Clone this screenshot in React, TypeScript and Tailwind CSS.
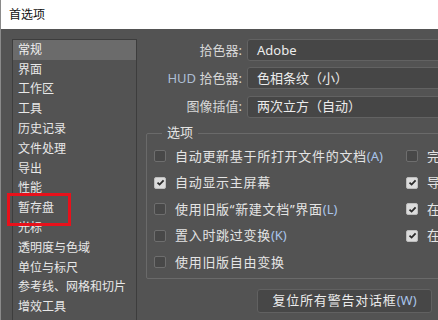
import React from "react";

const categories = [
  "常规",
  "界面",
  "工作区",
  "工具",
  "历史记录",
  "文件处理",
  "导出",
  "性能",
  "暂存盘",
  "光标",
  "透明度与色域",
  "单位与标尺",
  "参考线、网格和切片",
  "增效工具",
];

const pickers = [
  { label: "拾色器:", value: "Adobe" },
  { label: "HUD 拾色器:", value: "色相条纹（小）", hud: true },
  { label: "图像插值:", value: "两次立方（自动）" },
];

interface Opt {
  text: string;
  key?: string;
  checked: boolean;
}

const leftOptions: Opt[] = [
  { text: "自动更新基于所打开文件的文档", key: "(A)", checked: false },
  { text: "自动显示主屏幕", checked: true },
  { text: "使用旧版“新建文档”界面", key: "(L)", checked: false },
  { text: "置入时跳过变换", key: "(K)", checked: false },
  { text: "使用旧版自由变换", checked: false },
];

const rightOptions: Opt[] = [
  { text: "完成后用声音提示", checked: false },
  { text: "导出剪贴板", checked: true },
  { text: "在置入时调整图像大小", checked: true },
  { text: "在置入时始终创建智能对象", checked: true },
];

function Checkbox({ checked }: { checked: boolean }) {
  if (checked) {
    return (
      <span className="w-[12px] h-[12px] rounded-[2px] bg-[#dcdcdc] border border-[#bdbdbd] flex items-center justify-center shrink-0">
        <svg width="9" height="9" viewBox="0 0 9 9">
          <polyline points="1.5,4.6 3.6,6.6 7.6,2.4" fill="none" stroke="#2a2a2a" strokeWidth="1.8" />
        </svg>
      </span>
    );
  }
  return <span className="w-[12px] h-[12px] rounded-[2px] bg-[#484848] border border-[#6e6e6e] shrink-0" />;
}

function OptionRow({ opt }: { opt: Opt }) {
  return (
    <div className="h-[26.5px] flex items-center gap-[9px] whitespace-nowrap">
      <Checkbox checked={opt.checked} />
      <span className="text-[#e4e4e4] text-[13px] tracking-[0.7px]">
        {opt.text}
        {opt.key && <span className="text-[#a9c4ea] tracking-normal">{opt.key}</span>}
      </span>
    </div>
  );
}

export default function App() {
  return (
    <div
      className="w-[438px] h-[320px] overflow-hidden bg-[#535353] text-[12px] leading-none border-l border-[#8a8a8a]"
      style={{ fontFamily: '"Noto Sans", "Noto Sans CJK SC", sans-serif' }}
    >
      <div className="h-[29px] bg-white flex items-center pl-[8px] text-[#111] text-[12px]">首选项</div>

      <div className="flex pt-[10px] pl-[11px]">
        {/* category list */}
        <div className="relative w-[125px] h-[300px] border border-[#3d3d3d] shrink-0">
          {categories.map((c, i) => (
            <div
              key={c}
              className={
                i === 0
                  ? "h-[19.8px] flex items-center pl-[5px] bg-[#6b6b6b] text-[#f0f0f0]"
                  : "h-[19.8px] flex items-center pl-[5px] text-[#e8e8e8]"
              }
            >
              {c}
            </div>
          ))}
          <div className="absolute left-[-6px] top-[153px] w-[64px] h-[33px] border-[3px] border-[#e8111b]" />
        </div>

        {/* settings */}
        <div className="flex-1 min-w-0">
          <div className="flex flex-col gap-[6.3px]">
            {pickers.map((p) => (
              <div key={p.label} className="flex items-center">
                <div className="w-[110px] shrink-0 text-right pr-[5px] text-[#d8d8d8] text-[13px] whitespace-nowrap">
                  {p.hud ? (
                    <>
                      <span className="text-[#aebfd4]">HUD</span> 拾色器:
                    </>
                  ) : (
                    p.label
                  )}
                </div>
                <div className="w-[220px] h-[22px] shrink-0 rounded-[3px] bg-[#464646] border border-[#626262] flex items-center pl-[9px] text-[#ececec] text-[13px] whitespace-nowrap">
                  {p.value}
                </div>
              </div>
            ))}
          </div>

          <div className="relative mt-[15px] ml-[9px] w-[320px] h-[146px] border border-[#6a6a6a] rounded-[2px]">
            <span className="absolute left-[15px] -top-[8px] px-[5px] bg-[#535353] text-[#e4e4e4] text-[13px]">选项</span>
            <div className="grid grid-cols-[252px_1fr] pl-[7px] pt-[9.5px]">
              <div>
                {leftOptions.map((o) => (
                  <OptionRow key={o.text} opt={o} />
                ))}
              </div>
              <div>
                {rightOptions.map((o) => (
                  <OptionRow key={o.text} opt={o} />
                ))}
              </div>
            </div>
          </div>

          <div className="mt-[10px] ml-[120px] w-[175px] h-[24px] rounded-[3px] bg-[#474747] border border-[#616161] flex items-center justify-center text-[#ececec] text-[13px] tracking-[0.8px] whitespace-nowrap">
            复位所有警告对话框<span className="text-[#a9c4ea] tracking-normal">(W)</span>
          </div>
        </div>
      </div>
    </div>
  );
}
